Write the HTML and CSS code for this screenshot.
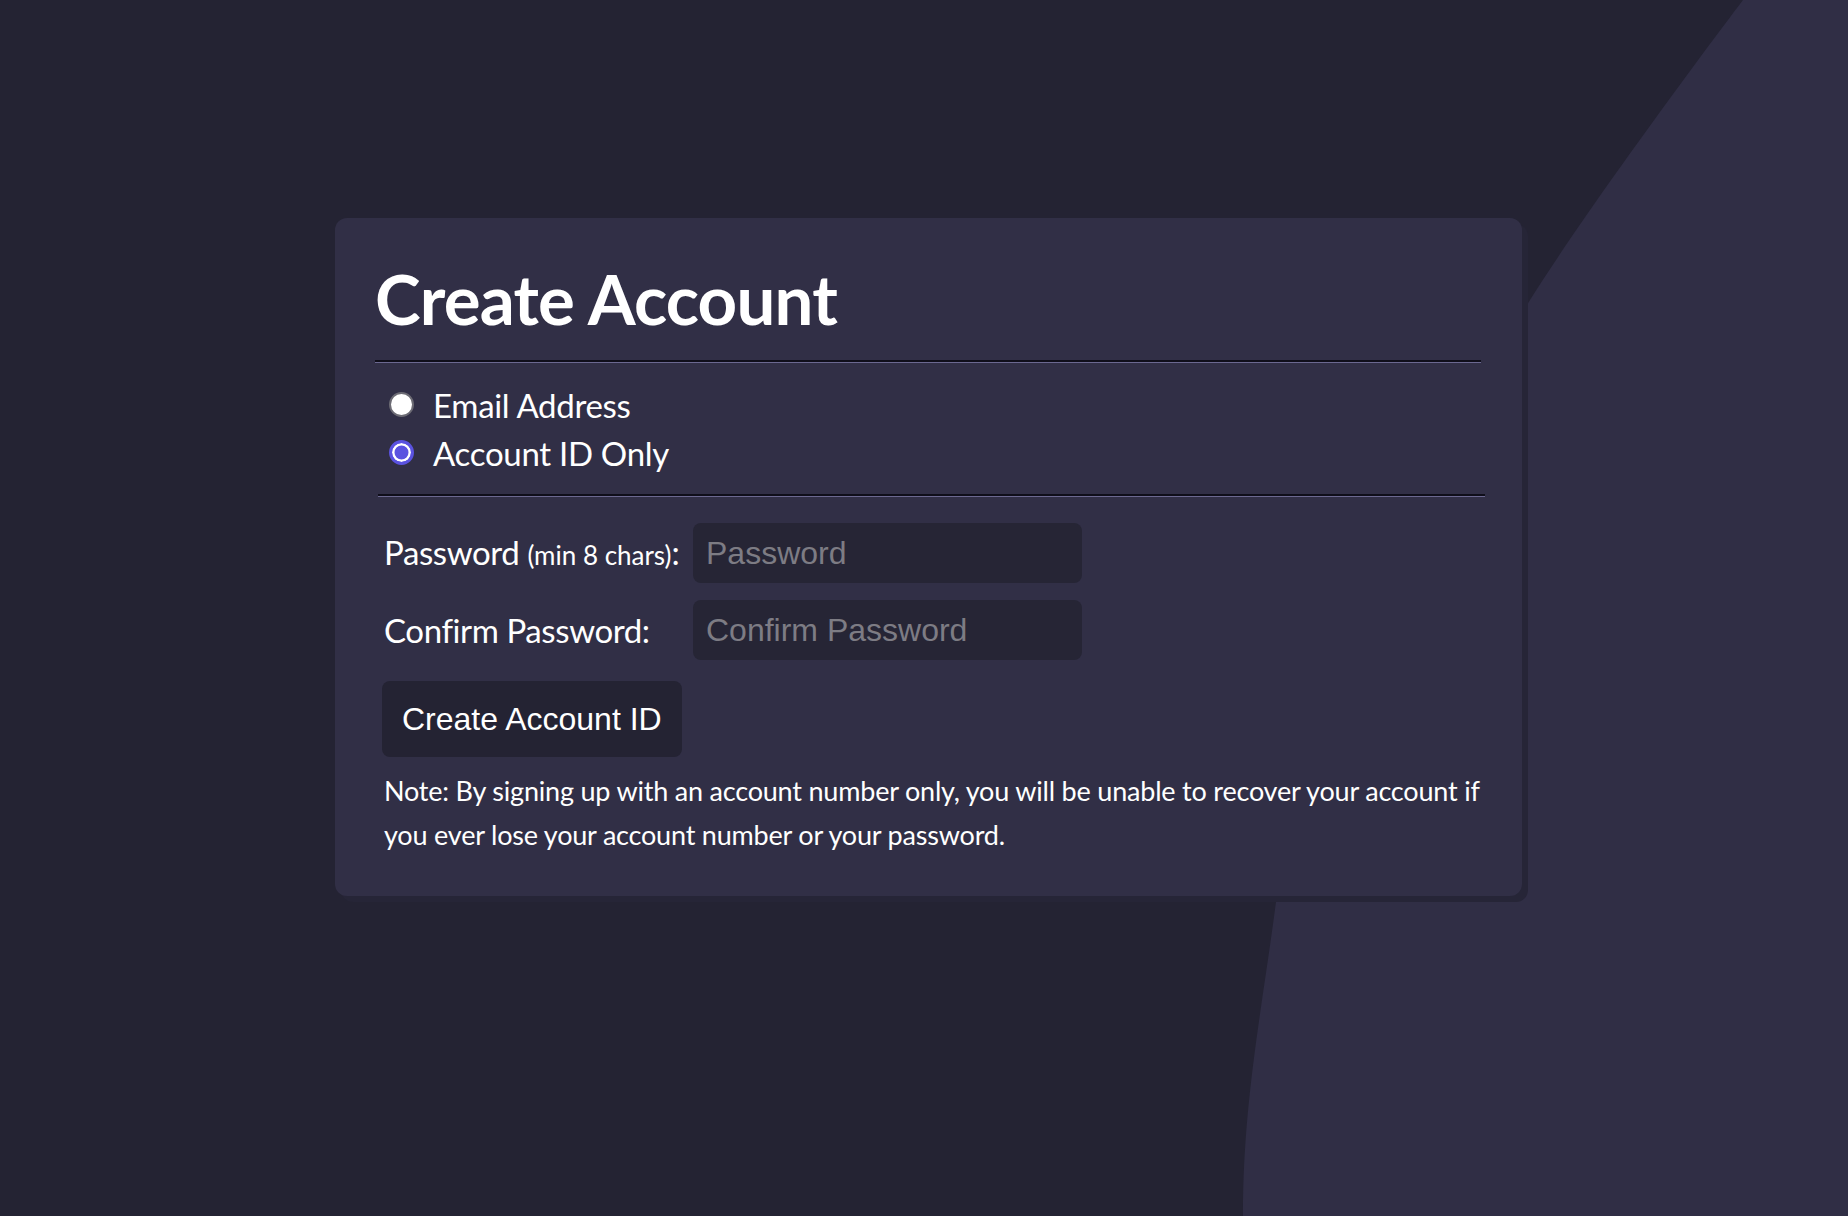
FILE: index.html
```html
<!DOCTYPE html>
<html lang="en">
<head>
<meta charset="utf-8">
<title>Create Account</title>
<link rel="stylesheet" href="styles.css">
</head>
<body>
<div class="page">
  <svg class="backdrop" viewBox="0 0 1848 1216" preserveAspectRatio="none" aria-hidden="true">
    <path d="M1743 0 C1690 70 1580 220 1530 300 C1420 480 1300 700 1276 902 C1262 1010 1243 1100 1243 1216 L1848 1216 L1848 0 Z"/>
  </svg>
  <main class="card">
    <h1 class="title">Create Account</h1>
    <hr class="rule">
    <div class="choices">
      <label class="choice"><input class="radio" type="radio" name="mode"><span>Email Address</span></label>
      <label class="choice"><input class="radio" type="radio" name="mode" checked><span>Account ID Only</span></label>
    </div>
    <hr class="rule rule-form">
    <form class="form">
      <div class="fields">
        <label class="field-label" for="pw">Password <small class="hint">(min 8 chars)</small>:</label>
        <input class="field-input" id="pw" type="password" placeholder="Password">
        <label class="field-label" for="pw2">Confirm Password:</label>
        <input class="field-input" id="pw2" type="password" placeholder="Confirm Password">
      </div>
      <button class="submit" type="button">Create Account ID</button>
      <p class="note">Note: By signing up with an account number only, you will be unable to recover your account if you ever lose your account number or your password.</p>
    </form>
  </main>
</div>
</body>
</html>
```
FILE: styles.css
```css
* { box-sizing: border-box; }

html, body {
  margin: 0;
  padding: 0;
  background: #242333;
}

body {
  font-family: "Lato", "Noto Sans", sans-serif;
  color: #ffffff;
}

.page {
  position: relative;
  width: 1848px;
  height: 1216px;
  overflow: hidden;
  padding: 218px 0 0 335px;
}

.backdrop {
  position: absolute;
  left: 0;
  top: 0;
  width: 1848px;
  height: 1216px;
}

.backdrop path { fill: #302e45; }

.card {
  position: relative;
  width: 1187px;
  background: #312f46;
  border-radius: 12px;
  box-shadow: 6px 6px 0 #262537;
  padding: 36px 41px 39px 40px;
}

.title {
  margin: 0;
  font-size: 69px;
  font-weight: 700;
  line-height: 90px;
  letter-spacing: -0.8px;
}

.rule {
  margin: 16px 0 0;
  height: 0;
  border: 0;
  border-top: 2px solid #0f0e1a;
  border-bottom: 1px solid #6b6890;
}

.rule-form {
  margin: 0 -4px 0 3px;
}

.choices {
  display: flex;
  flex-direction: column;
  padding: 17.5px 0 17px 14px;
}

.choice {
  display: flex;
  align-items: center;
  gap: 19px;
  font-size: 33px;
  line-height: 48px;
  letter-spacing: -0.3px;
}

.radio {
  appearance: none;
  -webkit-appearance: none;
  margin: 0;
  width: 25px;
  height: 25px;
  border-radius: 50%;
  background: #ffffff;
  border: 2px solid #6c6b74;
  flex: none;
}

.radio:checked {
  background: #5a52e0;
  border: 3px solid #5a52e0;
  box-shadow: inset 0 0 0 2.5px #ffffff;
}

.form {
  padding: 26.5px 0 0 9px;
}

.fields {
  display: grid;
  grid-template-columns: 296px 389px;
  column-gap: 13px;
  row-gap: 17px;
  align-items: center;
}

.field-label {
  font-size: 33px;
  line-height: 40px;
  letter-spacing: -0.4px;
  white-space: nowrap;
}

.hint { font-size: 26px; letter-spacing: 0; }

.field-input {
  width: 389px;
  height: 60px;
  border: 0;
  border-radius: 8px;
  background: #262535;
  padding: 0 13px;
  font-family: "Liberation Sans", Arial, sans-serif;
  font-size: 32px;
  color: #ffffff;
  outline: none;
}

.field-input::placeholder { color: #7d7c84; }

.submit {
  margin: 21px 0 0 -2px;
  height: 76px;
  padding: 0 20px;
  border: 0;
  border-radius: 8px;
  background: #242333;
  color: #ffffff;
  font-family: "Liberation Sans", Arial, sans-serif;
  font-size: 32px;
  cursor: pointer;
}

.note {
  margin: 11.5px -6px 0 0;
  font-size: 27px;
  line-height: 44px;
  letter-spacing: -0.2px;
}
```
